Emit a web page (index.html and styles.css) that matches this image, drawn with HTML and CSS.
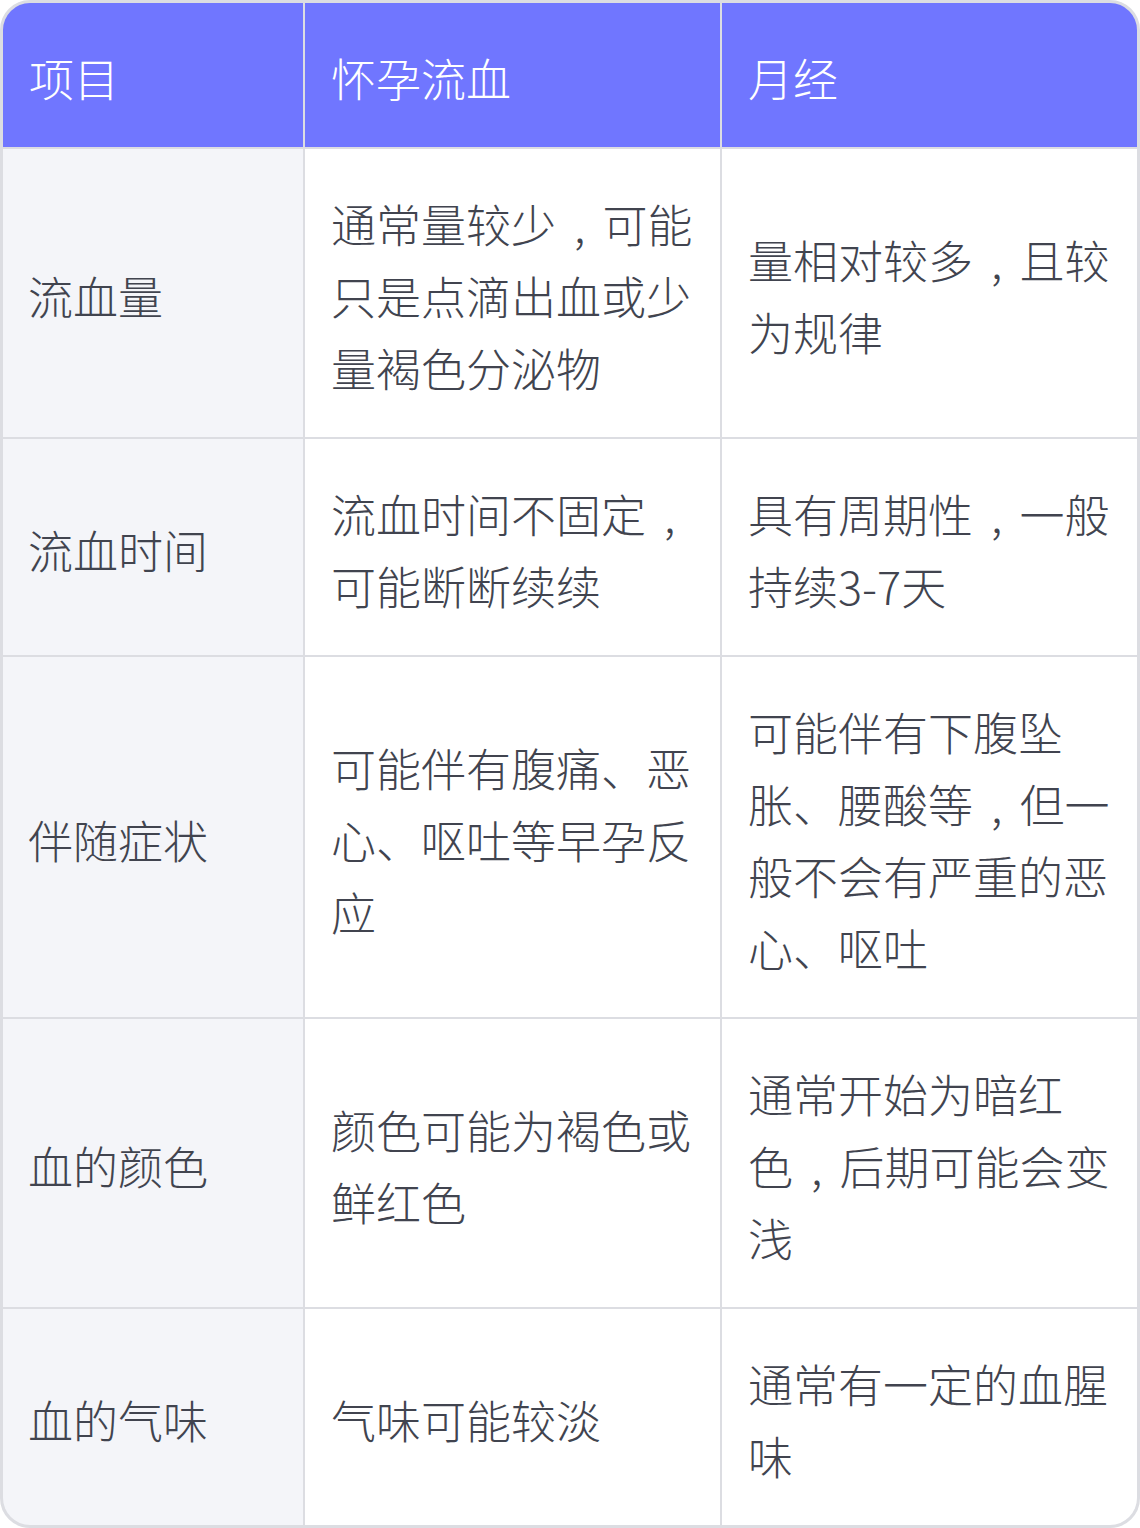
FILE: index.html
```html
<!DOCTYPE html>
<html lang="zh-CN">
<head>
<meta charset="utf-8">
<title>怀孕流血与月经对比</title>
<link rel="stylesheet" href="styles.css">
</head>
<body>
<div class="table-card">
  <div class="grid" role="table">
    <div class="cell head">项目</div>
    <div class="cell head">怀孕流血</div>
    <div class="cell head">月经</div>

    <div class="cell label">流血量</div>
    <div class="cell">通常量较少<span class="comma">,</span>可能只是点滴出血或少量褐色分泌物</div>
    <div class="cell">量相对较多<span class="comma">,</span>且较为规律</div>

    <div class="cell label">流血时间</div>
    <div class="cell">流血时间不固定<span class="comma">,</span>可能断断续续</div>
    <div class="cell">具有周期性<span class="comma">,</span>一般持续3-7天</div>

    <div class="cell label">伴随症状</div>
    <div class="cell">可能伴有腹痛、恶心、呕吐等早孕反应</div>
    <div class="cell">可能伴有下腹坠胀、腰酸等<span class="comma">,</span>但一般不会有严重的恶心、呕吐</div>

    <div class="cell label">血的颜色</div>
    <div class="cell">颜色可能为褐色或鲜红色</div>
    <div class="cell">通常开始为暗红色<span class="comma">,</span>后期可能会变浅</div>

    <div class="cell label">血的气味</div>
    <div class="cell">气味可能较淡</div>
    <div class="cell">通常有一定的血腥味</div>
  </div>
</div>
</body>
</html>
```

FILE: styles.css
```css
html, body {
  margin: 0;
  padding: 0;
  background: #ffffff;
}

body {
  font-family: "Noto Sans CJK SC", "Noto Sans", sans-serif;
  font-weight: 300;
}

.table-card {
  width: 1140px;
  height: 1528px;
  box-sizing: border-box;
  border: 3px solid #dcdde2;
  border-radius: 30px;
  overflow: hidden;
  background: #dcdde2;
}

.grid {
  display: grid;
  grid-template-columns: 300px 415px 415px;
  gap: 2px;
}

.cell {
  background: #ffffff;
  color: #41444f;
  font-size: 45px;
  line-height: 72px;
  padding: 39px 20px 33px 26px;
  display: block;
  align-content: center;
  word-break: normal;
}

.comma {
  padding: 0 0.38em 0 0.4em;
}

.cell.head {
  background: #7076ff;
  color: #ffffff;
}

.cell.label {
  background: #f4f5f9;
  padding-left: 25px;
}
```
